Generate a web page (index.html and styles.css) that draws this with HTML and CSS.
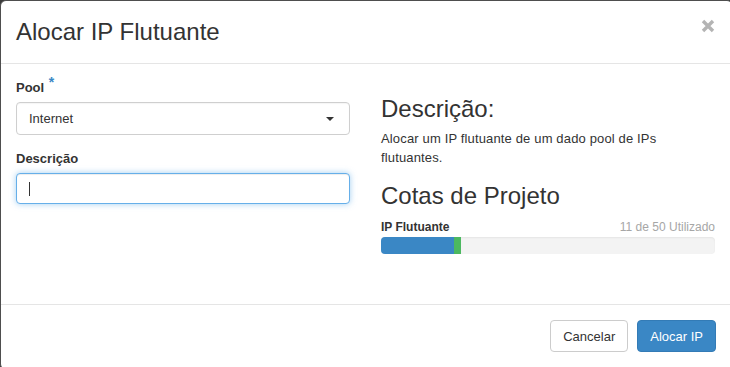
FILE: index.html
```html
<!DOCTYPE html>
<html lang="pt">
<head>
<meta charset="utf-8">
<title>Alocar IP Flutuante</title>
<link rel="stylesheet" href="styles.css">
</head>
<body>
<div class="modal">
  <div class="modal-header">
    <h2 class="modal-title">Alocar IP Flutuante</h2>
    <button class="close" aria-label="Fechar">
      <svg width="14" height="14" viewBox="0 0 14 14"><path d="M2 2 L12 12 M12 2 L2 12" stroke="#b4b4b4" stroke-width="3.4" fill="none"/></svg>
    </button>
  </div>
  <div class="modal-body">
    <div class="col-form">
      <div class="form-group">
        <label class="label">Pool <span class="req">*</span></label>
        <div class="form-control select">
          <span>Internet</span>
          <span class="caret"></span>
        </div>
      </div>
      <div class="form-group">
        <label class="label">Descrição</label>
        <div class="form-control focused"><span class="text-caret"></span></div>
      </div>
    </div>
    <div class="col-help">
      <h3 class="heading first">Descrição:</h3>
      <p class="help">Alocar um IP flutuante de um dado pool de IPs flutuantes.</p>
      <h3 class="heading">Cotas de Projeto</h3>
      <div class="quota-row">
        <strong class="quota-name">IP Flutuante</strong>
        <span class="quota-used">11 de 50 Utilizado</span>
      </div>
      <div class="progress">
        <div class="bar bar-used" style="width:22%"></div>
        <div class="bar bar-new" style="width:2%"></div>
      </div>
    </div>
  </div>
  <div class="modal-footer">
    <button class="btn btn-default">Cancelar</button>
    <button class="btn btn-primary">Alocar IP</button>
  </div>
</div>
</body>
</html>
```
FILE: styles.css
```css
html, body {
  margin: 0;
  padding: 0;
  width: 730px;
  height: 367px;
  overflow: hidden;
  background: #3b3b3b;
}
body {
  font-family: "Liberation Sans", Arial, sans-serif;
  font-size: 13px;
  color: #333;
}
.modal {
  box-sizing: border-box;
  width: 733px;
  height: 370px;
  background: #fff;
  border: 1px solid #4e4e4e;
  border-radius: 6px;
  display: flex;
  flex-direction: column;
}
.modal-header {
  box-sizing: border-box;
  height: 63px;
  flex: none;
  display: flex;
  justify-content: space-between;
  align-items: flex-start;
  padding: 14px 15px 0 15px;
  border-bottom: 1px solid #e5e5e5;
}
.modal-title {
  margin: 0;
  font-size: 24px;
  font-weight: normal;
  line-height: 34px;
  color: #333;
}
.close {
  margin: 4px 2px 0 0;
  padding: 0;
  border: 0;
  background: none;
  width: 14px;
  height: 14px;
  display: flex;
}
.modal-body {
  flex: none;
  display: grid;
  grid-template-columns: 334px 334px;
  column-gap: 31px;
  padding: 15px 15px 0 15px;
  height: 241px;
  box-sizing: border-box;
  border-bottom: 1px solid #e5e5e5;
}
.form-group {
  margin-bottom: 15px;
}
.label {
  display: block;
  font-weight: bold;
  font-size: 13px;
  line-height: 18px;
  height: 18px;
  margin-bottom: 5px;
  color: #333;
}
.req {
  color: #3a87c5;
  font-size: 14px;
  line-height: 0;
  position: relative;
  top: -5px;
  margin-left: 1px;
}
.form-control {
  box-sizing: border-box;
  height: 32px;
  border: 1px solid #cfcfcf;
  border-radius: 4px;
  padding: 0 12px;
  display: flex;
  align-items: center;
  font-size: 13px;
  color: #333;
  background: #fff;
}
.select {
  height: 33px;
  justify-content: space-between;
  padding-right: 15px;
  box-shadow: inset 0 1px 1px rgba(0,0,0,0.04);
}
.caret {
  width: 0;
  height: 0;
  border-left: 4px solid transparent;
  border-right: 4px solid transparent;
  border-top: 4px solid #333;
}
.focused {
  height: 31px;
  border-color: #66afe9;
  box-shadow: inset 0 1px 1px rgba(0,0,0,0.075), 0 0 6px rgba(102,175,233,0.6);
}
.text-caret {
  display: block;
  width: 1px;
  height: 14px;
  background: #333;
}
.heading {
  font-size: 24px;
  font-weight: normal;
  line-height: 26px;
  margin: 0 0 10px 0;
  color: #333;
}
.heading.first {
  margin-top: 17px;
  margin-bottom: 8px;
}
.help {
  margin: 0 0 16px 0;
  line-height: 18.5px;
  font-size: 13px;
  letter-spacing: 0.15px;
}
.quota-row {
  display: flex;
  justify-content: space-between;
  align-items: baseline;
  font-size: 12px;
  line-height: 17px;
  margin-bottom: 1px;
}
.quota-name {
  color: #333;
}
.quota-used {
  color: #a6a6a6;
}
.progress {
  display: flex;
  height: 17px;
  background: #f3f3f3;
  border-radius: 4px;
  overflow: hidden;
  box-shadow: inset 0 1px 2px rgba(0,0,0,0.06);
}
.bar-used {
  background: #3a87c5;
}
.bar-new {
  background: #4cb860;
}
.modal-footer {
  display: flex;
  justify-content: flex-end;
  gap: 9px;
  padding: 15px 16px 15px 15px;
}
.btn {
  box-sizing: border-box;
  height: 32px;
  padding: 0 12px;
  border-radius: 4px;
  font-family: "Liberation Sans", Arial, sans-serif;
  font-size: 13px;
  border: 1px solid #ccc;
  background: #fff;
  color: #333;
  min-width: 78px;
}
.btn-primary {
  background: #3a87c5;
  border-color: #337bb6;
  color: #fff;
}
```
